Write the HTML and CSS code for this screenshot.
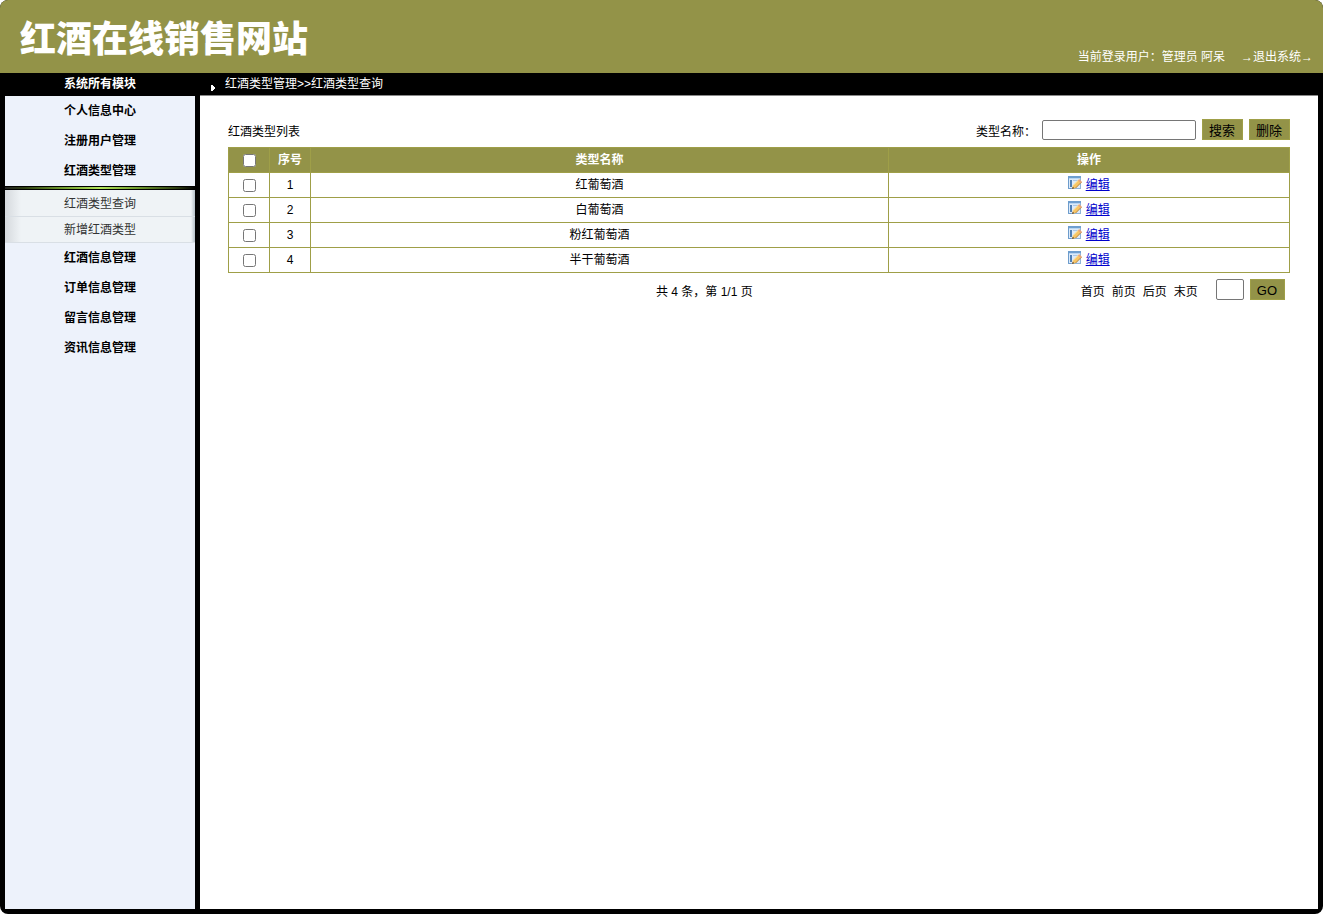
FILE: index.html
```
<!DOCTYPE html>
<html lang="zh-CN">
<head>
    <meta charset="UTF-8">
    <title>红酒在线销售网站</title>
    <link rel="stylesheet" href="styles.css">
</head>
<body>
<svg class="defs" width="0" height="0">
    <!-- 编辑图标 -->
    <symbol id="edit" viewBox="0 0 14 14">
        <rect x="0.5" y="0.5" width="12" height="12" fill="#dceafa" stroke="#8fb4da"/>
        <rect x="0" y="0" width="13" height="2" fill="#6f9fd0"/>
        <rect x="1" y="2" width="11" height="1" fill="#b9d6f2"/>
        <path d="M0.5 0.5v12h3" fill="none" stroke="#6d9ccc"/>
        <rect x="2" y="4" width="2" height="7" fill="#4f7fb5"/>
        <path d="M5 4.500h6" stroke="#a9c8e8"/>
        <path d="M4 13l1-3.500 6-6 2.600 2.500-6 6z" fill="#f7c565"/>
        <path d="M5 9.500l6-6" stroke="#ffe3a0"/>
        <path d="M7.600 12l6-6" stroke="#b8843a"/>
        <path d="M4 13l0.700-2.300 1.700 1.600z" fill="#5c4630"/>
        <path d="M10 4.500l1.300-1.200 2.500 2.500-1.200 1.200z" fill="#e8a27c"/>
    </symbol>
</svg>
<div class="header">
    <h1>红酒在线销售网站</h1>
    <div class="user">
        <span>当前登录用户：管理员 阿呆</span>
        <a href="#">→退出系统→</a>
    </div>
</div>
<div class="main">
    <div class="side">
        <div class="side-title">系统所有模块</div>
        <ul class="menu">
            <li><a href="#">个人信息中心</a></li>
            <li><a href="#">注册用户管理</a></li>
            <li><a href="#">红酒类型管理</a>
                <ul class="submenu">
                    <li><a href="#">红酒类型查询</a></li>
                    <li><a href="#">新增红酒类型</a></li>
                </ul>
            </li>
            <li><a href="#">红酒信息管理</a></li>
            <li><a href="#">订单信息管理</a></li>
            <li><a href="#">留言信息管理</a></li>
            <li><a href="#">资讯信息管理</a></li>
        </ul>
    </div>
    <div class="content">
        <div class="crumb">
            <svg width="4" height="6" viewBox="0 0 4 6"><path d="M0 0h2v1h1v1h1v2h-1v1h-1v1h-2z" fill="#fff"/></svg>
            <span>红酒类型管理&gt;&gt;红酒类型查询</span>
        </div>
        <div class="panel">
            <div class="tools">
                <span class="caption">红酒类型列表</span>
                <label for="name">类型名称：</label>
                <input class="text" type="text" id="name">
                <button class="btn" type="button">搜索</button>
                <button class="btn" type="button">删除</button>
            </div>
            <table class="list">
                <thead>
                <tr>
                    <th class="check"><input type="checkbox" aria-label="全选"></th>
                    <th class="no">序号</th>
                    <th>类型名称</th>
                    <th class="op">操作</th>
                </tr>
                </thead>
                <tbody>
                <tr>
                    <td><input type="checkbox" aria-label="选择1"></td>
                    <td>1</td>
                    <td>红葡萄酒</td>
                    <td><svg class="icon"><use href="#edit"/></svg> <a href="#">编辑</a></td>
                </tr>
                <tr>
                    <td><input type="checkbox" aria-label="选择2"></td>
                    <td>2</td>
                    <td>白葡萄酒</td>
                    <td><svg class="icon"><use href="#edit"/></svg> <a href="#">编辑</a></td>
                </tr>
                <tr>
                    <td><input type="checkbox" aria-label="选择3"></td>
                    <td>3</td>
                    <td>粉红葡萄酒</td>
                    <td><svg class="icon"><use href="#edit"/></svg> <a href="#">编辑</a></td>
                </tr>
                <tr>
                    <td><input type="checkbox" aria-label="选择4"></td>
                    <td>4</td>
                    <td>半干葡萄酒</td>
                    <td><svg class="icon"><use href="#edit"/></svg> <a href="#">编辑</a></td>
                </tr>
                </tbody>
            </table>
            <div class="pager">
                <span class="total">共 4 条，第 1/1 页</span>
                <div class="pages">
                    <a href="#">首页</a>
                    <a href="#">前页</a>
                    <a href="#">后页</a>
                    <a href="#">末页</a>
                </div>
                <input class="text page" type="text" aria-label="页码">
                <button class="btn" type="button">GO</button>
            </div>
        </div>
    </div>
</div>
</body>
</html>
```

FILE: styles.css
```
*{
    box-sizing: border-box;
}
html{
    background: #fff;
}
body{
    margin: 0;
    min-height: 100vh;
    display: flex;
    flex-direction: column;
    overflow: hidden;
    border-radius: 8px;
    background: #000;
    font: 12px/18px "Liberation Sans", "Noto Sans CJK SC", sans-serif;
    color: #000;
}
ul{
    margin: 0;
    padding: 0;
    list-style: none;
}
.defs{
    position: absolute;
}

/*头部*/
.header{
    height: 73px;
    padding: 0 10px 0 20px;
    display: flex;
    justify-content: space-between;
    background: #939348;
    color: #fff;
}
.header h1{
    margin: 0;
    font-size: 36px;
    font-weight: 900;
    line-height: 80px;
}
.user{
    display: flex;
    gap: 16px;
    align-self: flex-end;
    padding-bottom: 7px;
}
.user a{
    color: #fff;
    text-decoration: none;
}

/*主体*/
.main{
    flex: 1;
    display: flex;
    gap: 5px;
    padding: 0 5px 5px;
}
.side{
    width: 190px;
    display: flex;
    flex-direction: column;
    text-align: center;
    font-weight: bold;
}
.side-title{
    height: 23px;
    line-height: 23px;
    color: #fff;
}
.menu{
    flex: 1;
    background: #edf2fb;
}
.menu a{
    display: block;
    line-height: 30px;
    color: #000;
    text-decoration: none;
}
/*顶部黑条中间一道绿光*/
.submenu{
    padding-top: 5px;
    background:
        linear-gradient(to right, #222, #2d3d10 10%, #6f9a2c 30%, #b4e65a 50%, #6f9a2c 70%, #2d3d10 90%, #000) 0 1px/100% 2px no-repeat,
        linear-gradient(#000, #000) 0 0/100% 4px no-repeat,
        linear-gradient(to right, #d5d9dd, #eff3f6 16px, #eff3f6 186px, #b5c0c8);
    font-weight: normal;
}
.submenu li{
    border-bottom: 1px solid #d9dfe5;
}
.submenu a{
    padding-top: 2px;
    line-height: 23px;
    color: #333;
}

.content{
    flex: 1;
    display: flex;
    flex-direction: column;
}
.crumb{
    height: 23px;
    display: flex;
    gap: 10px;
    padding-left: 11px;
    border-bottom: 1px solid #888;
    line-height: 22px;
    color: #fff;
}
.crumb svg{
    margin-top: 12px;
}
.panel{
    flex: 1;
    padding: 23px 28px;
    background: #fff;
}

/*查询*/
.tools{
    display: flex;
    align-items: center;
    gap: 6px;
    height: 21px;
    margin-bottom: 7px;
}
.caption{
    flex: 1;
    padding-top: 5px;
}
.tools label{
    padding-top: 5px;
}
.text{
    width: 154px;
    height: 20px;
    padding: 1px 2px;
    border: 1px solid #767676;
    border-radius: 2px;
}
.btn{
    height: 21px;
    padding: 2px 7px 0 6px;
    border: 1px solid #9f9f48;
    background: #939348;
    font: 13px/17px "Liberation Sans", "Noto Sans CJK SC", sans-serif;
    color: #000;
}

/*列表*/
.list{
    width: 100%;
    table-layout: fixed;
    border-collapse: collapse;
    text-align: center;
}
.list th,
.list td{
    height: 25px;
    padding: 0;
    border: 1px solid #9f9f48;
}
.list th{
    background: #939348;
    color: #fff;
}
.list input{
    display: block;
    width: 13px;
    height: 13px;
    margin: 0 auto;
}
.list a{
    color: #0000cc;
}
.check,
.no{
    width: 41px;
}
.op{
    width: 401px;
}
.icon{
    width: 14px;
    height: 14px;
    vertical-align: -1px;
}

/*分页*/
.pager{
    display: flex;
    align-items: center;
    gap: 6px;
    margin-top: 5px;
    padding-right: 5px;
}
.total{
    flex: 1;
    padding: 5px 0 0 106px;
    text-align: center;
}
.pages{
    display: flex;
    gap: 7px;
    padding: 5px 12px 0 0;
}
.pages a{
    color: #000;
    text-decoration: none;
}
.page{
    width: 28px;
    height: 21px;
}
```
